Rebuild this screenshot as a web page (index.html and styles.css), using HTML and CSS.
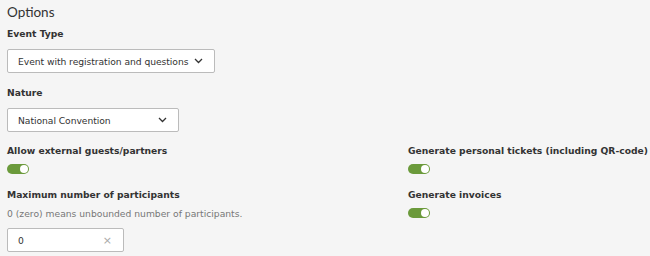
FILE: index.html
```html
<!DOCTYPE html>
<html lang="en">
<head>
  <meta charset="UTF-8" />
  <title>Options</title>
  <link rel="stylesheet" href="styles.css">
</head>
<body>
  <h2 class="section-title">Options</h2>

  <div class="field">
    <label class="field-label">Event Type</label>
    <div class="select select-type">
      <span>Event with registration and questions</span>
      <svg class="chevron" width="9" height="6" viewBox="0 0 9 6"><path d="M1 1l3.5 3.5 3.5-3.5" fill="none" stroke="#333" stroke-width="1.3"/></svg>
    </div>
  </div>

  <div class="field">
    <label class="field-label">Nature</label>
    <div class="select select-nature">
      <span>National Convention</span>
      <svg class="chevron" width="9" height="6" viewBox="0 0 9 6"><path d="M1 1l3.5 3.5 3.5-3.5" fill="none" stroke="#333" stroke-width="1.3"/></svg>
    </div>
  </div>

  <div class="columns">
    <div class="col">
      <div class="field">
        <label class="field-label">Allow external guests/partners</label>
        <div class="toggle"><span class="knob"></span></div>
      </div>
      <div class="field">
        <label class="field-label">Maximum number of participants</label>
        <p class="help">0 (zero) means unbounded number of participants.</p>
        <div class="text-input">
          <span>0</span>
          <span class="clear">&times;</span>
        </div>
      </div>
    </div>
    <div class="col">
      <div class="field">
        <label class="field-label">Generate personal tickets (including QR-code)</label>
        <div class="toggle"><span class="knob"></span></div>
      </div>
      <div class="field">
        <label class="field-label">Generate invoices</label>
        <div class="toggle"><span class="knob"></span></div>
      </div>
    </div>
  </div>
</body>
</html>
```

FILE: styles.css
```css
* {
  margin: 0;
  padding: 0;
  box-sizing: border-box;
}

body {
  font-family: "DejaVu Sans", Verdana, sans-serif;
  font-size: 9.2px;
  color: #333;
  background: #f5f5f5;
  padding: 4px 7px 0;
}

.section-title {
  font-family: Lato, "Open Sans", sans-serif;
  font-size: 13.5px;
  font-weight: normal;
  line-height: 16px;
  margin-bottom: 8px;
}

.field {
  margin-bottom: 14px;
}

.field-label {
  display: block;
  font-weight: bold;
  line-height: 12px;
  margin-bottom: 9px;
  white-space: nowrap;
}

.select {
  display: flex;
  align-items: center;
  justify-content: space-between;
  height: 24px;
  padding: 0 11px 0 10px;
  background: #fff;
  border: 1px solid #bbb;
  border-radius: 2px;
  white-space: nowrap;
  letter-spacing: -0.05px;
}

.select-type {
  width: 208px;
}

.select-nature {
  width: 172px;
}

.columns {
  display: grid;
  grid-template-columns: 401px 1fr;
  margin-top: -1px;
}

.columns .field-label {
  margin-bottom: 7px;
}

.columns .field {
  margin-bottom: 15px;
}

.columns .field:last-child {
  margin-bottom: 0;
}

.toggle {
  position: relative;
  width: 22px;
  height: 10px;
  border-radius: 5px;
  background: #6b9a3b;
}

.knob {
  position: absolute;
  right: 1px;
  top: 1px;
  width: 8px;
  height: 8px;
  border-radius: 50%;
  background: #fff;
}

.help {
  color: #777;
  line-height: 12px;
  margin: 4px 0 8px;
}

.text-input {
  display: flex;
  align-items: center;
  justify-content: space-between;
  width: 117px;
  height: 24px;
  padding: 0 11px 0 10px;
  background: #fff;
  border: 1px solid #bbb;
  border-radius: 2px;
}

.clear {
  color: #aaa;
  font-size: 11px;
}
```
